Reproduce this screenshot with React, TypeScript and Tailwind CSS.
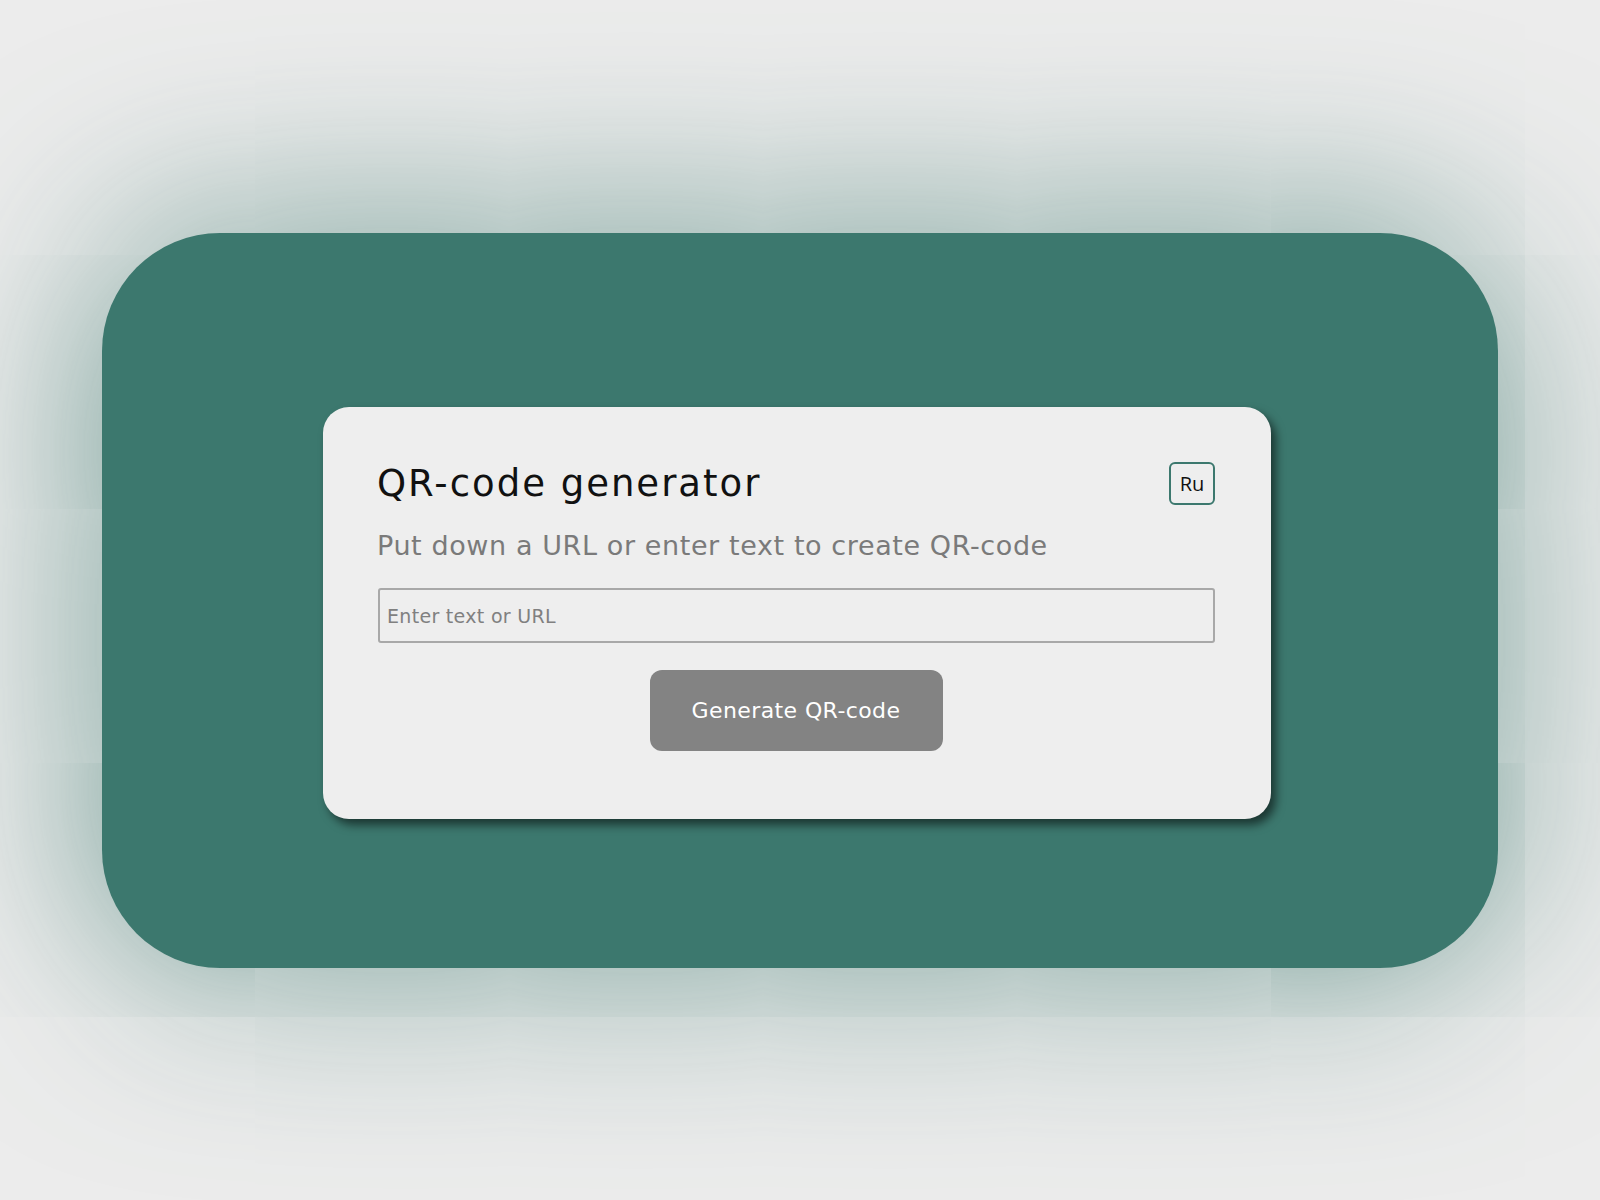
import { useState } from 'react'

export default function App() {
  const [value, setValue] = useState('')

  return (
    <div className="flex min-h-screen items-center justify-center bg-[#ececec] font-['DejaVu_Sans',sans-serif]">
      <div className="flex h-[735px] w-[1396px] items-center justify-center rounded-[118px] bg-[#3c786e] shadow-[0_0_200px_rgba(60,120,110,0.75)]">
        <div className="mr-[6px] mt-[26px] w-[948px] rounded-[26px] bg-[#eeeeee] pb-[68px] pl-[54px] pr-[56px] pt-[55px] shadow-[5px_6px_10px_rgba(0,0,0,0.55)]">
          <div className="flex h-[43px] items-center justify-between">
            <h1 className="text-[37px] leading-none tracking-[2px] text-[#111]">QR-code generator</h1>
            <button className="flex h-[43px] w-[46px] items-center justify-center rounded-[6px] border-2 border-[#3c786e] font-['Open_Sans',sans-serif] text-[20px] text-[#111]">
              Ru
            </button>
          </div>
          <p className="mt-[23px] text-[27px] leading-[36px] tracking-[0.6px] text-[#7a7a7a]">
            Put down a URL or enter text to create QR-code
          </p>
          <input
            value={value}
            onChange={e => setValue(e.target.value)}
            placeholder="Enter text or URL"
            className="ml-[1px] mt-[24px] block h-[55px] w-[calc(100%-1px)] rounded-[3px] border-2 border-[#a8a8a8] bg-[#eeeeee] px-[7px] text-[19px] tracking-[0.3px] text-[#333] outline-none placeholder:text-[#808080]"
          />
          <div className="mt-[27px] flex justify-center">
            <button className="h-[81px] w-[293px] rounded-[12px] bg-[#838383] text-[22px] tracking-[0.4px] text-white">
              Generate QR-code
            </button>
          </div>
        </div>
      </div>
    </div>
  )
}
